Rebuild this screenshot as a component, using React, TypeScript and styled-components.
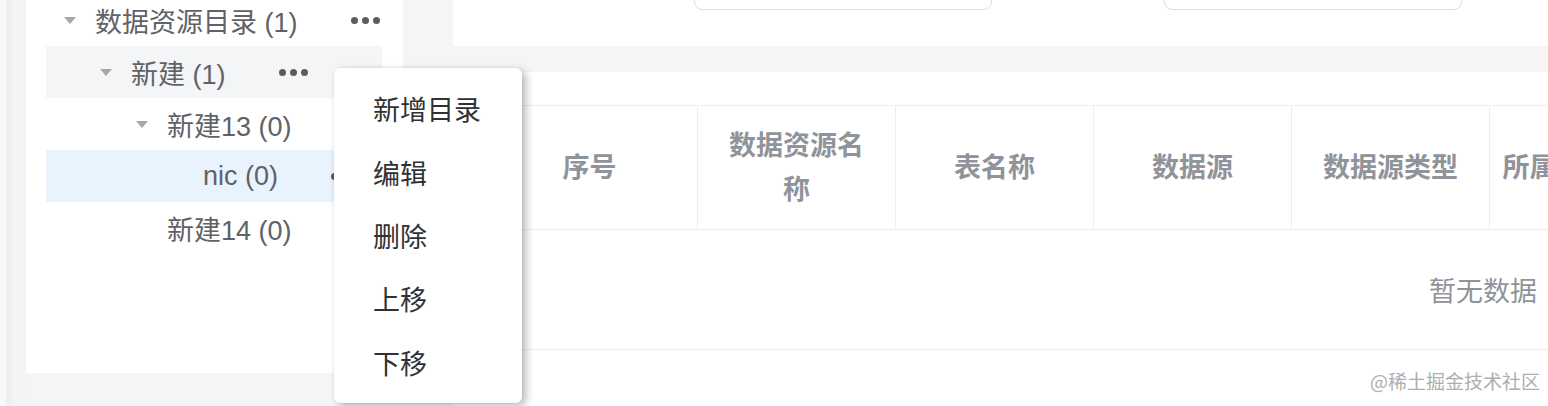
import React from 'react';
import styled, { createGlobalStyle } from 'styled-components';

const GlobalStyle = createGlobalStyle`
  html, body {
    margin: 0;
    padding: 0;
    overflow: hidden;
    background: #f5f5f5;
    font-family: "Liberation Sans", "Noto Sans CJK SC", sans-serif;
  }
`;

const Page = styled.div`
  position: relative;
  display: flex;
  height: 406px;
  padding-left: 26px;
  overflow: hidden;
  background: linear-gradient(
    to right,
    #f9f9f9 0,
    #f9f9f9 6px,
    #efefef 6px,
    #efefef 12px,
    #f4f4f4 12px,
    #f4f4f4 26px,
    #f5f5f5 26px
  );
`;

/* left tree panel */
const SidePanel = styled.aside`
  flex: 0 0 377px;
  box-sizing: border-box;
  height: 373px;
  padding: 0 21px 0 20px;
  background: #fff;
  overflow: hidden;
`;

const TreeList = styled.ul`
  list-style: none;
  margin: -6px 0 0;
  padding: 0;
`;

const TreeRow = styled.li<{ $level: number; $state?: 'hover' | 'selected' }>`
  display: flex;
  align-items: center;
  height: 52px;
  padding-left: ${(p) => 12 + p.$level * 36}px;
  font-size: 27px;
  color: #5f6266;
  background: ${(p) =>
    p.$state === 'selected' ? '#e9f3fe' : p.$state === 'hover' ? '#f4f5f7' : 'transparent'};
`;

const Switcher = styled.span<{ $leaf?: boolean }>`
  flex: 0 0 24px;
  height: 24px;
  margin-right: 13px;
  display: flex;
  align-items: center;
  justify-content: center;

  &::before {
    content: '';
    display: ${(p) => (p.$leaf ? 'none' : 'block')};
    width: 0;
    height: 0;
    border-left: 6px solid transparent;
    border-right: 6px solid transparent;
    border-top: 7px solid #a8a8a8;
  }
`;

const Title = styled.span`
  white-space: nowrap;
`;

const MoreDots = styled.span`
  display: flex;
  gap: 4px;
  margin-left: 53px;

  i {
    width: 7px;
    height: 7px;
    border-radius: 50%;
    background: #5c5c5c;
  }
`;

/* right side */
const Main = styled.main`
  flex: 1;
  min-width: 0;
  margin-left: 50px;
  display: flex;
  flex-direction: column;
  gap: 26px;
`;

const FilterBar = styled.div`
  display: flex;
  align-items: flex-end;
  gap: 172px;
  box-sizing: border-box;
  height: 46px;
  padding: 0 0 36px 241px;
  background: #fff;
`;

const Field = styled.div`
  flex: 0 0 298px;
  box-sizing: border-box;
  height: 40px;
  border: 1px solid #dcdfe6;
  border-radius: 8px;
  background: #fff;
`;

const TableCard = styled.section`
  flex: 1;
  padding: 33px 0 0 29px;
  background: #fff;
  overflow: hidden;
`;

const Table = styled.div`
  width: 2002px;
`;

const HeaderRow = styled.div`
  display: flex;
  height: 123px;
  border-top: 1px solid #ebeef5;
  border-bottom: 1px solid #ebeef5;
`;

const HeaderCell = styled.div<{ $width: number; $nowrap?: boolean }>`
  flex: 0 0 ${(p) => p.$width}px;
  box-sizing: border-box;
  display: flex;
  align-items: center;
  justify-content: center;
  padding: 0 ${(p) => (p.$nowrap ? 0 : 20)}px;
  border-right: 1px solid #ebeef5;
  font-size: 27px;
  font-weight: 600;
  line-height: 44px;
  color: #909399;
  text-align: center;
  white-space: ${(p) => (p.$nowrap ? 'nowrap' : 'normal')};
`;

const EmptyRow = styled.div`
  display: flex;
  align-items: center;
  justify-content: center;
  height: 119px;
  border-bottom: 1px solid #ebeef5;
  font-size: 27px;
  color: #909399;
`;

const Watermark = styled.span`
  position: absolute;
  right: 8px;
  bottom: 12px;
  font-family: "Noto Sans CJK SC", sans-serif;
  font-size: 19px;
  color: #aeaeae;
`;

/* context menu over the tree */
const DropdownMenu = styled.ul`
  position: absolute;
  left: 334px;
  top: 68px;
  width: 188px;
  box-sizing: border-box;
  height: 335px;
  margin: 0;
  padding: 9px 0;
  list-style: none;
  background: #fff;
  border-radius: 6px;
  box-shadow: 4px 3px 8px rgba(0, 0, 0, 0.28), 0 0 2px rgba(0, 0, 0, 0.08);
`;

const MenuItem = styled.li`
  display: flex;
  align-items: center;
  height: 63.4px;
  padding-left: 39px;
  font-size: 27px;
  color: #303133;
`;

const treeRows: { label: string; level: number; leaf?: boolean; more?: boolean; state?: 'hover' | 'selected' }[] = [
  { label: '数据资源目录 (1)', level: 0, more: true },
  { label: '新建 (1)', level: 1, more: true, state: 'hover' },
  { label: '新建13 (0)', level: 2 },
  { label: 'nic (0)', level: 3, leaf: true, more: true, state: 'selected' },
  { label: '新建14 (0)', level: 2, leaf: true },
];

const columns = [
  { title: '序号', width: 216 },
  { title: '数据资源名称', width: 198 },
  { title: '表名称', width: 198 },
  { title: '数据源', width: 198 },
  { title: '数据源类型', width: 198 },
  { title: '所属目录', width: 134, nowrap: true },
  { title: '创建时间', width: 198 },
  { title: '操作', width: 206 },
];

const menuItems = ['新增目录', '编辑', '删除', '上移', '下移'];

export default function App() {
  return (
    <>
      <GlobalStyle />
      <Page>
        <SidePanel>
          <TreeList>
            {treeRows.map((row) => (
              <TreeRow key={row.label} $level={row.level} $state={row.state}>
                <Switcher $leaf={row.leaf} />
                <Title>{row.label}</Title>
                {row.more && (
                  <MoreDots>
                    <i />
                    <i />
                    <i />
                  </MoreDots>
                )}
              </TreeRow>
            ))}
          </TreeList>
        </SidePanel>

        <Main>
          <FilterBar>
            <Field />
            <Field />
          </FilterBar>
          <TableCard>
            <Table>
              <HeaderRow>
                {columns.map((col) => (
                  <HeaderCell key={col.title} $width={col.width} $nowrap={col.nowrap}>
                    {col.title}
                  </HeaderCell>
                ))}
              </HeaderRow>
              <EmptyRow>暂无数据</EmptyRow>
            </Table>
          </TableCard>
        </Main>

        <DropdownMenu>
          {menuItems.map((item) => (
            <MenuItem key={item}>{item}</MenuItem>
          ))}
        </DropdownMenu>

        <Watermark>@稀土掘金技术社区</Watermark>
      </Page>
    </>
  );
}
